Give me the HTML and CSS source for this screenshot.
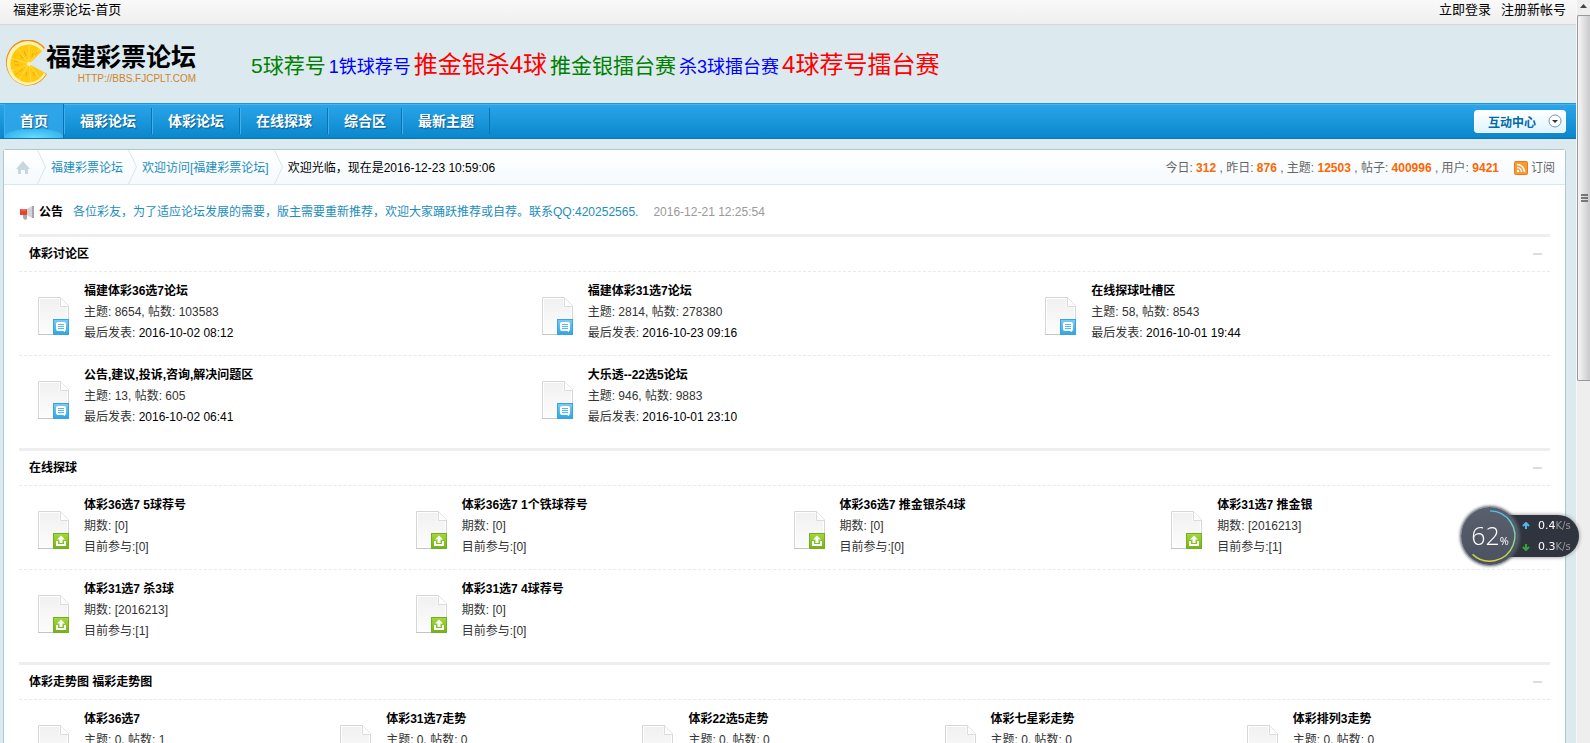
FILE: index.html
```html
<!DOCTYPE html>
<html lang="zh-CN">
<head>
    <meta charset="UTF-8">
    <meta name="viewport" content="width=device-width, initial-scale=1.0">
    <title>福建彩票论坛-首页</title>
    <link rel="stylesheet" href="styles.css">
</head>
<body>

<!-- shared icons -->
<svg class="defs" width="0" height="0" aria-hidden="true">
    <defs>
        <linearGradient id="paper" x1="0" y1="0" x2="0" y2="1">
            <stop offset="0" stop-color="#f1f1f1"/>
            <stop offset="1" stop-color="#fcfcfc"/>
        </linearGradient>
        <linearGradient id="blue" x1="0" y1="0" x2="0" y2="1">
            <stop offset="0" stop-color="#7cccf4"/>
            <stop offset="1" stop-color="#2fa6e6"/>
        </linearGradient>
        <linearGradient id="green" x1="0" y1="0" x2="0" y2="1">
            <stop offset="0" stop-color="#a4d93c"/>
            <stop offset="1" stop-color="#72b315"/>
        </linearGradient>
        <symbol id="doc" viewBox="0 0 31 38">
            <path d="M.5 .5H22.500L30.500 9V37.500H.5Z" fill="#fff" stroke="#d6d6d6"/>
            <path d="M2 2H21.500V9.500H29V36H2Z" fill="url(#paper)"/>
            <path d="M22.500 .5V9.500H30.500" fill="#fff" stroke="#dcdcdc"/>
            <path d="M0 37.500H31" stroke="#c4c4c4"/>
        </symbol>
        <symbol id="forum" viewBox="0 0 31 38">
            <use href="#doc"/>
            <rect x="15.500" y="22.500" width="15" height="15" fill="url(#blue)" stroke="#3aa3dc"/>
            <path d="M20 25H26Q28 25 28 27V32Q28 34 27 34V35L25 34H20Q18 34 18 32V27Q18 25 20 25Z" fill="#fff"/>
            <path d="M20 27.500H26M20 29.500H26M20 31.500H26" stroke="#52b8ee"/>
        </symbol>
        <symbol id="guess" viewBox="0 0 31 38">
            <use href="#doc"/>
            <rect x="15.500" y="22.500" width="15" height="15" fill="url(#green)" stroke="#72b020"/>
            <path d="M23 24.500L27 28.500H24.500V32H21.500V28.500H19Z" fill="#fff"/>
            <path d="M19 30V34H27V30" fill="none" stroke="#fff" stroke-width="2"/>
        </symbol>
    </defs>
</svg>

<div class="page">
    <div class="topbar">
        <a href="#">福建彩票论坛-首页</a>
        <div class="login">
            <a href="#">立即登录</a>
            <a href="#">注册新帐号</a>
        </div>
    </div>

    <div class="header">
        <a class="logo" href="#">
            <svg width="43" height="48" viewBox="0 0 43 48" aria-hidden="true">
                <path d="M23 24L39 8A22 23 0 1 0 41 34Z" fill="#f08a12"/>
                <path d="M23 24L38 9A21 22 0 1 0 40 34Z" fill="#fff3ae"/>
                <path d="M23 24L36 11A18 19 0 1 0 38 33Z" fill="#ffc90e"/>
                <path d="M23 24L23 6M23 24L12 9M23 24L5 18M23 24L5 31M23 24L13 40M23 24L25 43M23 24L34 39M23 24L33 9" stroke="#ffe36a" stroke-width=".7" fill="none"/>
                <path d="M14 15L17 19M9 25H13M13 32L17 29M20 36L21 32M27 13L26 17M29 36L27 32M18 11L20 16M8 21L12 22M9 35L12 33M31 12L29 15" stroke="#f7a30c" fill="none"/>
                <circle cx="23" cy="24" r="2" fill="#fff3ae"/>
            </svg>
            <span class="logo-text">
                <b>福建彩票论坛</b>
                <small>HTTP://BBS.FJCPLT.COM</small>
            </span>
        </a>
        <div class="promo">
            <a class="green" href="#">5球荐号</a>
            <a class="blue" href="#">1铁球荐号</a>
            <a class="red" href="#">推金银杀4球</a>
            <a class="green" href="#">推金银擂台赛</a>
            <a class="blue" href="#">杀3球擂台赛</a>
            <a class="red" href="#">4球荐号擂台赛</a>
        </div>
    </div>

    <div class="nav">
        <a class="active" href="#">首页</a>
        <a href="#">福彩论坛</a>
        <a href="#">体彩论坛</a>
        <a href="#">在线探球</a>
        <a href="#">综合区</a>
        <a href="#">最新主题</a>
        <button type="button">互动中心
            <svg width="14" height="14" viewBox="0 0 14 14" aria-hidden="true">
                <circle cx="7" cy="7" r="6" fill="#fff" stroke="#6f9bb8"/>
                <path d="M4 6H10L7 9Z" fill="#333"/>
            </svg>
        </button>
    </div>

    <div class="main">
        <div class="crumb">
            <a class="home" href="#" aria-label="首页">
                <svg width="14" height="13" viewBox="0 0 14 13"><path d="M7 0L14 8H12V13H9V9H5V13H2V8H0Z" fill="#c6d8de"/></svg>
            </a>
            <svg class="arrow" width="9" height="34" viewBox="0 0 9 34" aria-hidden="true"><path d="M.5 0L8.500 17L.5 34" fill="none" stroke="#d6e6ea"/></svg>
            <a href="#">福建彩票论坛</a>
            <svg class="arrow" width="9" height="34" viewBox="0 0 9 34" aria-hidden="true"><path d="M.5 0L8.500 17L.5 34" fill="none" stroke="#d6e6ea"/></svg>
            <a href="#">欢迎访问[福建彩票论坛]</a>
            <svg class="arrow" width="9" height="34" viewBox="0 0 9 34" aria-hidden="true"><path d="M.5 0L8.500 17L.5 34" fill="none" stroke="#d6e6ea"/></svg>
            <span>欢迎光临，现在是2016-12-23 10:59:06</span>
            <div class="stats">今日: <b>312</b> , 昨日: <b>876</b> , 主题: <b>12503</b> , 帖子: <b>400996</b> , 用户: <b>9421</b></div>
            <a class="rss" href="#">
                <svg width="14" height="14" viewBox="0 0 14 14" aria-hidden="true">
                    <rect x=".5" y=".5" width="13" height="13" rx="1" fill="#fa9a35" stroke="#ee7a14"/>
                    <circle cx="4" cy="10" r="1.200" fill="#fff"/>
                    <path d="M3 6.500A4.500 4.500 0 0 1 7.500 11M3 3.500A7.500 7.500 0 0 1 10.500 11" fill="none" stroke="#fff" stroke-width="1.500"/>
                </svg>
                订阅
            </a>
        </div>

        <div class="notice">
            <svg width="15" height="14" viewBox="0 0 15 14" aria-hidden="true">
                <path d="M3 8H7V13L5 14L3 12Z" fill="#a9a9ad"/>
                <path d="M0 3H7V9H0Z" fill="#e8432e"/>
                <path d="M7 3L12 0V12L7 9Z" fill="#d4d4d8"/>
                <path d="M13 0V12" stroke="#a4a4aa" stroke-width="2"/>
                <path d="M1 4H6" stroke="#f68d7c"/>
            </svg>
            <b>公告</b>
            <a href="#">各位彩友，为了适应论坛发展的需要，版主需要重新推荐，欢迎大家踊跃推荐或自荐。联系QQ:420252565.</a>
            <time>2016-12-21 12:25:54</time>
        </div>

        <div class="section">
            <div class="section-title"><h2>体彩讨论区</h2><button type="button" aria-label="收起"></button></div>
            <div class="row three">
                <div class="item">
                    <svg width="31" height="38" aria-hidden="true"><use href="#forum"/></svg>
                    <div><h3><a href="#">福建体彩36选7论坛</a></h3><p>主题: 8654, 帖数: 103583</p><p>最后发表: <a href="#">2016-10-02 08:12</a></p></div>
                </div>
                <div class="item">
                    <svg width="31" height="38" aria-hidden="true"><use href="#forum"/></svg>
                    <div><h3><a href="#">福建体彩31选7论坛</a></h3><p>主题: 2814, 帖数: 278380</p><p>最后发表: <a href="#">2016-10-23 09:16</a></p></div>
                </div>
                <div class="item">
                    <svg width="31" height="38" aria-hidden="true"><use href="#forum"/></svg>
                    <div><h3><a href="#">在线探球吐槽区</a></h3><p>主题: 58, 帖数: 8543</p><p>最后发表: <a href="#">2016-10-01 19:44</a></p></div>
                </div>
            </div>
            <div class="row three">
                <div class="item">
                    <svg width="31" height="38" aria-hidden="true"><use href="#forum"/></svg>
                    <div><h3><a href="#">公告,建议,投诉,咨询,解决问题区</a></h3><p>主题: 13, 帖数: 605</p><p>最后发表: <a href="#">2016-10-02 06:41</a></p></div>
                </div>
                <div class="item">
                    <svg width="31" height="38" aria-hidden="true"><use href="#forum"/></svg>
                    <div><h3><a href="#">大乐透--22选5论坛</a></h3><p>主题: 946, 帖数: 9883</p><p>最后发表: <a href="#">2016-10-01 23:10</a></p></div>
                </div>
            </div>
        </div>

        <div class="section">
            <div class="section-title"><h2>在线探球</h2><button type="button" aria-label="收起"></button></div>
            <div class="row four">
                <div class="item">
                    <svg width="31" height="38" aria-hidden="true"><use href="#guess"/></svg>
                    <div><h3><a href="#">体彩36选7 5球荐号</a></h3><p>期数: [0]</p><p>目前参与:[0]</p></div>
                </div>
                <div class="item">
                    <svg width="31" height="38" aria-hidden="true"><use href="#guess"/></svg>
                    <div><h3><a href="#">体彩36选7 1个铁球荐号</a></h3><p>期数: [0]</p><p>目前参与:[0]</p></div>
                </div>
                <div class="item">
                    <svg width="31" height="38" aria-hidden="true"><use href="#guess"/></svg>
                    <div><h3><a href="#">体彩36选7 推金银杀4球</a></h3><p>期数: [0]</p><p>目前参与:[0]</p></div>
                </div>
                <div class="item">
                    <svg width="31" height="38" aria-hidden="true"><use href="#guess"/></svg>
                    <div><h3><a href="#">体彩31选7 推金银</a></h3><p>期数: [2016213]</p><p>目前参与:[1]</p></div>
                </div>
            </div>
            <div class="row four">
                <div class="item">
                    <svg width="31" height="38" aria-hidden="true"><use href="#guess"/></svg>
                    <div><h3><a href="#">体彩31选7 杀3球</a></h3><p>期数: [2016213]</p><p>目前参与:[1]</p></div>
                </div>
                <div class="item">
                    <svg width="31" height="38" aria-hidden="true"><use href="#guess"/></svg>
                    <div><h3><a href="#">体彩31选7 4球荐号</a></h3><p>期数: [0]</p><p>目前参与:[0]</p></div>
                </div>
            </div>
        </div>

        <div class="section">
            <div class="section-title"><h2>体彩走势图 福彩走势图</h2><button type="button" aria-label="收起"></button></div>
            <div class="row five">
                <div class="item">
                    <svg width="31" height="38" aria-hidden="true"><use href="#forum"/></svg>
                    <div><h3><a href="#">体彩36选7</a></h3><p>主题: 0, 帖数: 1</p></div>
                </div>
                <div class="item">
                    <svg width="31" height="38" aria-hidden="true"><use href="#forum"/></svg>
                    <div><h3><a href="#">体彩31选7走势</a></h3><p>主题: 0, 帖数: 0</p></div>
                </div>
                <div class="item">
                    <svg width="31" height="38" aria-hidden="true"><use href="#forum"/></svg>
                    <div><h3><a href="#">体彩22选5走势</a></h3><p>主题: 0, 帖数: 0</p></div>
                </div>
                <div class="item">
                    <svg width="31" height="38" aria-hidden="true"><use href="#forum"/></svg>
                    <div><h3><a href="#">体彩七星彩走势</a></h3><p>主题: 0, 帖数: 0</p></div>
                </div>
                <div class="item">
                    <svg width="31" height="38" aria-hidden="true"><use href="#forum"/></svg>
                    <div><h3><a href="#">体彩排列3走势</a></h3><p>主题: 0, 帖数: 0</p></div>
                </div>
            </div>
        </div>
    </div>
</div>

<div class="scrollbar" aria-hidden="true">
    <svg class="up" width="13" height="15" viewBox="0 0 13 15"><path d="M3 8L6.500 4L10 8Z" fill="#444"/></svg>
    <div class="thumb">
        <svg width="7" height="9" viewBox="0 0 7 9"><path d="M0 1H7M0 4H7M0 7H7" stroke="#555" stroke-width="1.500"/></svg>
    </div>
</div>

<!-- floating speed meter -->
<div class="meter">
    <div class="percent">
        <svg width="58" height="58" viewBox="0 0 60 60" aria-hidden="true">
            <defs>
                <linearGradient id="ring" x1="0" y1="0" x2="0" y2="1">
                    <stop offset="0" stop-color="#4fc0f0"/>
                    <stop offset=".5" stop-color="#7fd8a8"/>
                    <stop offset=".9" stop-color="#b9d84a"/>
                    <stop offset="1" stop-color="#d8d040"/>
                </linearGradient>
            </defs>
            <path d="M30 4A26 26 0 1 1 12 49" fill="none" stroke="url(#ring)" stroke-width="1.500"/>
        </svg>
        <div><strong>62</strong><small>%</small></div>
    </div>
    <div class="speed">
        <div><svg width="8" height="8" viewBox="0 0 8 8" aria-hidden="true"><path d="M4 7V1M1 4L4 1L7 4" fill="none" stroke="#4db8f0" stroke-width="2"/></svg><span>0.4<i>K/s</i></span></div>
        <div><svg width="8" height="8" viewBox="0 0 8 8" aria-hidden="true"><path d="M4 1V7M1 4L4 7L7 4" fill="none" stroke="#2fa836" stroke-width="2"/></svg><span>0.3<i>K/s</i></span></div>
    </div>
</div>

</body>
</html>
```

FILE: styles.css
```css
* {
    box-sizing: border-box;
}

html, body {
    height: 100%;
}

body {
    margin: 0;
    display: flex;
    overflow: hidden;
    background: #dceaef;
    font: 12px/21px "Liberation Sans", "Noto Sans CJK SC", sans-serif;
    color: #333;
}

a {
    color: #000;
    text-decoration: none;
}

h2, h3, p {
    margin: 0;
    font-size: 12px;
}

svg {
    flex: none;
}

.defs {
    position: absolute;
}

.page {
    flex: 1;
    min-width: 0;
}

.topbar {
    display: flex;
    justify-content: space-between;
    height: 25px;
    padding: 0 10px 0 13px;
    border-bottom: 1px solid #d8d8d8;
    background: linear-gradient(#f9f9f9, #efefef);
    font-size: 13px;
    line-height: 20px;
}

.login {
    display: flex;
    gap: 10px;
}

/* header */
.header {
    display: flex;
    align-items: center;
    height: 78px;
    padding: 0 6px;
}

.logo {
    display: flex;
    align-items: center;
    width: 245px;
}

.logo-text {
    display: flex;
    flex-direction: column;
    align-items: flex-end;
    margin-left: -3px;
}

.logo-text b {
    font-size: 25px;
    line-height: 30px;
}

.logo-text small {
    font-size: 10px;
    line-height: 14px;
    color: #d08428;
}

.promo {
    display: flex;
    align-items: baseline;
    gap: 3px;
    padding-top: 4px;
    line-height: 30px;
}

.promo .green {
    font-size: 21px;
    color: #008000;
}

.promo .blue {
    font-size: 18px;
    color: #00f;
}

.promo .red {
    font-size: 24px;
    color: #f00;
}

/* nav */
.nav {
    display: flex;
    align-items: center;
    height: 36px;
    padding: 0 10px 0 4px;
    border-top: 1px solid #1b97dd;
    border-bottom: 1px solid #0a76b8;
    background: linear-gradient(#2ca5e9, #0987cd);
    box-shadow: inset 0 1px #48b4ec;
}

.nav a {
    height: 26px;
    padding: 0 15px;
    border-left: 1px solid #3fb0ea;
    border-right: 1px solid #0a72b0;
    color: #fff;
    font-size: 14px;
    font-weight: bold;
    line-height: 26px;
    text-shadow: 1px 1px 1px #0a5f96;
}

.nav .active {
    height: 34px;
    line-height: 34px;
    background: radial-gradient(ellipse 32px 10px at bottom, #6adcff, #38b8f0 90%, transparent), linear-gradient(#2fa6ea, #2aa2e6);
}

.nav button {
    display: flex;
    align-items: center;
    gap: 12px;
    height: 23px;
    margin-left: auto;
    padding: 0 3px 0 13px;
    border: 1px solid #fff;
    border-radius: 3px;
    background: linear-gradient(#fff, #def4fd);
    color: #0068ad;
    font: bold 12px "Liberation Sans", "Noto Sans CJK SC", sans-serif;
}

/* main panel */
.main {
    margin: 10px 10px 0 3px;
    min-height: 100%;
    border: 1px solid #a9c9d3;
    border-radius: 3px;
    background: #fff;
}

.crumb {
    display: flex;
    align-items: center;
    height: 35px;
    padding: 0 10px 0 12px;
    border-bottom: 1px solid #d9e9ec;
    background: linear-gradient(#fff, #f5fafe);
    line-height: 23px;
}

.crumb > a, .crumb span, .stats {
    padding-top: 2px;
}

.crumb a {
    color: #1c8dbc;
}

.crumb .home {
    display: flex;
    margin-right: 7px;
    padding-top: 0;
}

.crumb .arrow {
    margin-right: 5px;
}

.crumb a + .arrow {
    margin-left: 5px;
}

.crumb .home + .arrow {
    margin-left: 0;
}

.crumb span {
    color: #000;
}

.stats {
    margin-left: auto;
    color: #666;
}

.stats b {
    color: #ff6600;
}

.crumb .rss {
    display: flex;
    align-items: center;
    gap: 3px;
    margin-left: 15px;
    color: #666;
}

.notice {
    display: flex;
    align-items: center;
    height: 49px;
    padding: 6px 15px 0 16px;
}

.notice b {
    margin: 0 10px 0 4px;
    color: #000;
}

.notice a {
    color: #1c8dbc;
}

.notice time {
    margin-left: 15px;
    color: #999;
}

/* forum sections */
.section {
    margin: 0 15px 9px;
    border-top: 3px solid #eee;
}

.section-title {
    display: flex;
    align-items: center;
    justify-content: space-between;
    height: 34px;
    padding: 0 8px 0 10px;
}

.section-title h2 {
    color: #000;
}

.section-title button {
    width: 9px;
    height: 2px;
    padding: 0;
    border: 0;
    background: #ddd;
}

.row {
    display: grid;
    height: 84px;
    padding: 9px 10px 0;
    border-top: 1px dashed #eaeaea;
}

.three {
    grid-template-columns: repeat(3, 1fr);
}

.four {
    grid-template-columns: repeat(4, 1fr);
}

.five {
    grid-template-columns: repeat(5, 1fr);
}

.item {
    display: flex;
    gap: 15px;
    padding-left: 9px;
}

.item svg {
    margin-top: 16px;
}

/* scrollbar */
.scrollbar {
    width: 14px;
    border-left: 1px solid #f8f8f8;
    background: #eee;
}

.scrollbar .up {
    display: block;
}

.thumb {
    display: flex;
    align-items: center;
    justify-content: center;
    height: 366px;
    border: 1px solid #999;
    border-right: 0;
    border-radius: 2px 0 0 2px;
    background: linear-gradient(to right, #f6f6f6, #c9c9cb);
}

/* speed meter, floats over the page */
.meter {
    position: fixed;
    right: 11px;
    top: 507px;
    display: flex;
    align-items: center;
}

.percent {
    display: grid;
    place-items: center;
    z-index: 1;
    width: 58px;
    height: 58px;
    border-radius: 50%;
    background: linear-gradient(#5b606f, #4c5160);
    box-shadow: 0 0 3px 1px #555b68;
    color: #fff;
}

.percent > * {
    grid-area: 1 / 1;
}

.percent strong {
    font: 300 25px/30px "Open Sans", sans-serif;
}

.percent small {
    font: 11px "Open Sans", sans-serif;
}

.speed {
    width: 72px;
    height: 42px;
    margin-left: -12px;
    padding-left: 15px;
    border-radius: 0 21px 21px 0;
    background: #30343e;
    box-shadow: 0 0 4px #888;
    color: #fff;
    font: 11px/21px "DejaVu Sans", sans-serif;
}

.speed div {
    display: flex;
    align-items: center;
    gap: 8px;
}

.speed i {
    color: #999;
    font-size: 10px;
    font-style: normal;
}
```
